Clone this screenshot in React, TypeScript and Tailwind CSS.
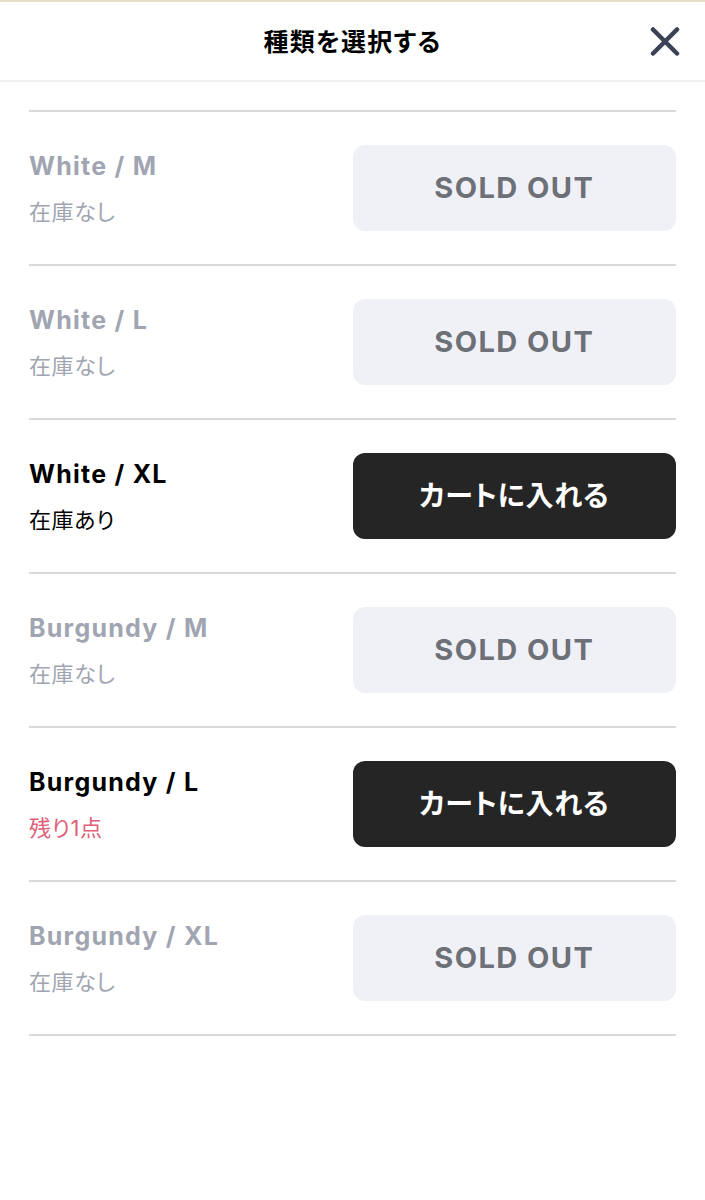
import React from 'react';

type Variant = {
  name: string;
  stock: number;
};

const variants: Variant[] = [
  { name: 'White / M', stock: 0 },
  { name: 'White / L', stock: 0 },
  { name: 'White / XL', stock: 10 },
  { name: 'Burgundy / M', stock: 0 },
  { name: 'Burgundy / L', stock: 1 },
  { name: 'Burgundy / XL', stock: 0 },
];

function StockLabel({ stock }: { stock: number }) {
  if (stock === 0) {
    return <p className="text-[22px] leading-8 tracking-wide text-[#a0a5b1]">在庫なし</p>;
  }
  if (stock === 1) {
    return <p className="text-[22px] leading-8 tracking-wide text-[#e0607a]">残り1点</p>;
  }
  return <p className="text-[22px] leading-8 tracking-wide text-black">在庫あり</p>;
}

function VariantRow({ name, stock }: Variant) {
  const soldOut = stock === 0;

  return (
    <li className="flex items-center border-b-2 border-[#d9d9d9] py-[33px]">
      <div className="flex flex-1 flex-col gap-3">
        <h2 className={`text-[25px] leading-9 font-bold tracking-wider ${soldOut ? 'text-[#a0a5b1]' : 'text-black'}`}>
          {name}
        </h2>
        <StockLabel stock={stock} />
      </div>
      {soldOut ? (
        <button type="button" disabled className="h-[86px] w-1/2 rounded-xl bg-[#f0f1f6] text-[29px] font-bold tracking-wider text-[#6d7077]">
          SOLD OUT
        </button>
      ) : (
        <button type="button" className="h-[86px] w-1/2 rounded-xl bg-[#252525] text-[28px] font-bold tracking-wide text-white">
          カートに入れる
        </button>
      )}
    </li>
  );
}

function App() {
  return (
    <div className="min-h-screen border-t-2 border-[#e6dfc8] bg-white font-[Inter,'Noto_Sans_CJK_JP',sans-serif] [font-feature-settings:'palt']">
      <header className="relative flex h-20 items-center justify-center border-b-2 border-[#f0f0f2] pt-1">
        <h1 className="text-[25px] font-bold tracking-wider text-black">種類を選択する</h1>
        <button type="button" aria-label="閉じる" className="absolute right-6 text-[#3b4256]">
          <svg viewBox="0 0 32 32" className="size-8" fill="none" stroke="currentColor" strokeWidth="4.5" strokeLinecap="round">
            <path d="M4 2.5 28 26.5M28 2.5 4 26.5" />
          </svg>
        </button>
      </header>
      <main className="px-[29px] pt-7">
        <ul className="border-t-2 border-[#d9d9d9]">
          {variants.map((variant) => (
            <VariantRow key={variant.name} {...variant} />
          ))}
        </ul>
      </main>
    </div>
  );
}

export default App;
